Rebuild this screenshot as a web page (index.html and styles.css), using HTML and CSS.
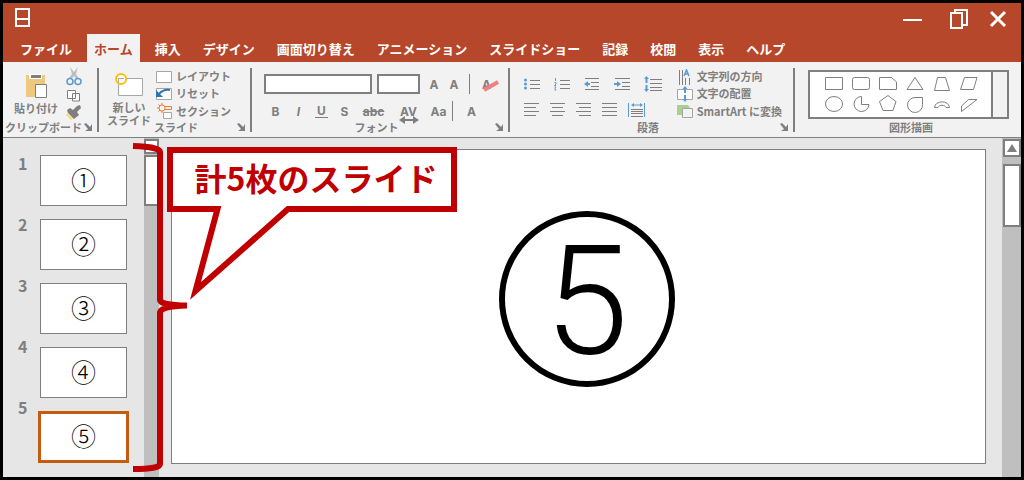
FILE: index.html
```html
<!DOCTYPE html>
<html lang="ja">
<head>
<meta charset="utf-8">
<meta name="viewport" content="width=device-width, initial-scale=1">
<title>スライド</title>
<link rel="stylesheet" href="styles.css">
</head>
<body>
<div class="window">
  <header class="titlebar">
    <svg class="app-icon" width="15" height="19" viewBox="0 0 15 19"><path d="M1 1H14V18H1ZM1 11H14" /></svg>
    <div class="window-controls">
      <button type="button" aria-label="最小化"><svg width="20" height="20" viewBox="0 0 20 20"><path d="M0 11H19" /></svg></button>
      <button type="button" aria-label="元に戻す"><svg width="20" height="20" viewBox="0 0 20 20"><path d="M2 4H13V19H2ZM6 4V1H18V16H13" /></svg></button>
      <button type="button" aria-label="閉じる"><svg class="close" width="20" height="20" viewBox="0 0 20 20"><path d="M3 3L17 17M17 3L3 17" /></svg></button>
    </div>
  </header>
  <nav class="tabs">
    <button type="button" class="tab">ファイル</button>
    <button type="button" class="tab active">ホーム</button>
    <button type="button" class="tab">挿入</button>
    <button type="button" class="tab">デザイン</button>
    <button type="button" class="tab">画面切り替え</button>
    <button type="button" class="tab">アニメーション</button>
    <button type="button" class="tab">スライドショー</button>
    <button type="button" class="tab">記録</button>
    <button type="button" class="tab">校閲</button>
    <button type="button" class="tab">表示</button>
    <button type="button" class="tab">ヘルプ</button>
  </nav>

  <div class="ribbon">
    <section class="group clipboard">
      <div class="group-body">
        <button type="button" class="big-button">
          <svg width="22" height="24" viewBox="0 0 22 24"><path fill="#edc87e" d="M1 1H20V23H1Z"/><path fill="#fff" d="M4 0H17V5H4Z"/><path fill="#7f7f7f" d="M6 1H16V4H6Z"/><path fill="#fff" stroke="#7f7f7f" d="M10.500 10.500H21.500V23.500H10.500Z"/></svg>
          <span>貼り付け</span>
        </button>
        <div class="tool-stack">
          <button type="button" aria-label="切り取り"><svg width="16" height="20" viewBox="0 0 16 20"><path fill="#bfbfbf" d="M4 1L8 6L12 1L10 8L13 13H10L8 10L5 13H2L6 8Z"/><g fill="none" stroke="#5b9bd5" stroke-width="1.500"><circle cx="4" cy="15.500" r="3"/><circle cx="12" cy="15.500" r="3"/></g></svg></button>
          <button type="button" aria-label="コピー"><svg width="14" height="13" viewBox="0 0 14 13"><path fill="#fff" stroke="#7f7f7f" d="M.5 1.500H8.500V9.500H.5ZM5.500 4.500H12.500V12H5.500Z"/></svg></button>
          <button type="button" aria-label="書式のコピー"><svg width="16" height="15" viewBox="0 0 16 15"><path fill="#ffd966" d="M1 8L7 14L5 15L0 10Z"/><path fill="#7f7f7f" d="M1 5L4 3L7 5L11 1L14 0L15 3L11 7L13 10L8 14L2 8Z"/></svg></button>
        </div>
      </div>
      <div class="group-footer"><span>クリップボード</span><button type="button" class="launcher" aria-label="クリップボードの詳細"><svg width="9" height="9" viewBox="0 0 9 9"><path d="M0 1L2 0L6 4L8 1V8H1L4 6Z"/></svg></button></div>
    </section>

    <section class="group slides">
      <div class="group-body">
        <button type="button" class="big-button">
          <svg width="30" height="24" viewBox="0 0 30 24"><path fill="#fff" stroke="#a6a6a6" d="M4.500 5.500H28.500V22.500H4.500Z"/><circle cx="7" cy="6" r="5" fill="#fff" stroke="#ffc000" stroke-width="2"/><path fill="none" stroke="#a6a6a6" d="M4.500 10V5.500H10"/></svg>
          <span>新しい</span>
          <span>スライド</span>
        </button>
        <div class="command-list">
          <button type="button"><svg width="16" height="16" viewBox="0 0 16 16"><path fill="#fff" stroke="#a6a6a6" d="M.5 2.500H15.500V13.500H.5Z"/></svg>レイアウト</button>
          <button type="button"><svg width="16" height="16" viewBox="0 0 16 16"><path fill="#fff" stroke="#a6a6a6" d="M.5 2.500H15.500V13.500H.5Z"/><path fill="none" stroke="#2e75b6" stroke-width="2" d="M3 8Q7 3 14 4"/><path fill="#2e75b6" d="M0 4V11L7 11Z"/></svg>リセット</button>
          <button type="button"><svg width="16" height="16" viewBox="0 0 16 16"><g fill="none" stroke="#ed7d31"><circle cx="6" cy="5" r="3"/><path d="M6 0V2M6 8V10M1 5H3M2.500 1.500L4 3M2.500 8.500L4 7M9 3.500H15.500V6.500H9"/></g><path fill="#fff" stroke="#a6a6a6" d="M7.500 9.500H15.500V15.500H7.500Z"/></svg>セクション</button>
        </div>
      </div>
      <div class="group-footer"><span>スライド</span><button type="button" class="launcher" aria-label="スライドの詳細"><svg width="9" height="9" viewBox="0 0 9 9"><path d="M0 1L2 0L6 4L8 1V8H1L4 6Z"/></svg></button></div>
    </section>

    <section class="group font">
      <div class="group-body">
        <div class="row font-top">
          <input type="text" class="font-name" aria-label="フォント名">
          <input type="text" class="font-size" aria-label="フォントサイズ">
          <button type="button" class="narrow">A</button>
          <button type="button" class="narrow">A</button>
          <i class="mini-rule"></i>
          <button type="button" class="clear">A<svg width="16" height="12" viewBox="0 0 16 12"><path d="M1 10L15 2"/></svg></button>
        </div>
        <div class="row font-bottom">
          <button type="button">B</button>
          <button type="button" class="italic">I</button>
          <button type="button" class="underline"><span>U</span></button>
          <button type="button">S</button>
          <button type="button" class="wide strike">abc</button>
          <button type="button" class="wide spacing">AV<svg width="20" height="8" viewBox="0 0 20 8"><path d="M0 4L6 0V3H14V0L20 4L14 8V5H6V8Z"/></svg></button>
          <button type="button" class="medium">Aa</button>
          <i class="mini-rule"></i>
          <button type="button" class="wide">A</button>
        </div>
      </div>
      <div class="group-footer"><span>フォント</span><button type="button" class="launcher" aria-label="フォントの詳細"><svg width="9" height="9" viewBox="0 0 9 9"><path d="M0 1L2 0L6 4L8 1V8H1L4 6Z"/></svg></button></div>
    </section>

    <section class="group paragraph">
      <div class="group-body">
        <div class="paragraph-tools">
          <div class="row list-row">
            <button type="button" aria-label="箇条書き"><svg width="16" height="14" viewBox="0 0 16 14"><path class="line" d="M6 3.500H16M6 7.500H16M6 11.500H16"/><g fill="#5b9bd5"><circle cx="1.500" cy="3" r="1.500"/><circle cx="1.500" cy="7" r="1.500"/><circle cx="1.500" cy="11" r="1.500"/></g></svg></button>
            <button type="button" aria-label="段落番号"><svg width="16" height="14" viewBox="0 0 16 14"><path class="line" d="M6 3.500H16M6 7.500H16M6 11.500H16"/><path class="blue" d="M1.500 1V4M.5 5.500H2V7L.5 8.500H2M.5 10H2L1 11.500L2 13H.5"/></svg></button>
            <button type="button" aria-label="インデントを減らす"><svg width="16" height="14" viewBox="0 0 16 14"><path class="line" d="M1 1.500H15M7 5.500H15M7 9.500H15M1 12.500H15"/><path fill="#5b9bd5" d="M0 7L4 4V6H6V8H4V10Z"/></svg></button>
            <button type="button" aria-label="インデントを増やす"><svg width="16" height="14" viewBox="0 0 16 14"><path class="line" d="M1 1.500H16M8 5.500H16M8 9.500H16M1 12.500H16"/><path fill="#5b9bd5" d="M7 7L3 4V6H0V8H3V10Z"/></svg></button>
            <button type="button" aria-label="行間"><svg width="18" height="16" viewBox="0 0 18 16"><path class="line" d="M6 3.500H18M6 7.500H18M6 11.500H18M6 14.500H18"/><path fill="#5b9bd5" d="M2.500 0L5 3H3.500V7H1.500V3H0ZM2.500 16L5 13H3.500V9H1.500V13H0Z"/></svg></button>
          </div>
          <div class="row align-row">
            <button type="button" aria-label="左揃え"><svg width="15" height="14" viewBox="0 0 15 14"><path class="line" d="M0 .5H15M0 4.500H12M0 8.500H15M0 12.500H12"/></svg></button>
            <button type="button" aria-label="中央揃え"><svg width="15" height="14" viewBox="0 0 15 14"><path class="line" d="M0 .5H15M2 4.500H13M0 8.500H15M2 12.500H13"/></svg></button>
            <button type="button" aria-label="右揃え"><svg width="15" height="14" viewBox="0 0 15 14"><path class="line" d="M0 .5H15M3 4.500H15M0 8.500H15M3 12.500H15"/></svg></button>
            <button type="button" aria-label="両端揃え"><svg width="15" height="14" viewBox="0 0 15 14"><path class="line" d="M0 .5H15M0 4.500H15M0 8.500H15M0 12.500H15"/></svg></button>
            <button type="button" aria-label="均等割り付け"><svg width="18" height="14" viewBox="0 0 18 14"><path class="line" d="M3 6.500H15M3 8.500H15M3 10.500H15M3 13.500H15"/><path class="blue" d="M.5 0V14M16.500 0V14M4 2H14"/><path fill="#5b9bd5" d="M3 2L6 0V4ZM15 2L12 0V4Z"/></svg></button>
          </div>
        </div>
        <div class="command-list">
          <button type="button"><svg width="16" height="16" viewBox="0 0 16 16"><path fill="none" stroke="#7f7f7f" d="M2.500 1V16M5.500 1V16M8.500 9V16M12.500 9V16"/><path fill="none" stroke="#5b9bd5" stroke-width="1.500" d="M7 7L9.500 1L12 7M8 5H11"/></svg>文字列の方向</button>
          <button type="button"><svg width="16" height="16" viewBox="0 0 16 16"><path fill="#fff" stroke="#a6a6a6" d="M.5 3.500H15.500V13.500H.5Z"/><path fill="#5b9bd5" d="M8 0L10.500 3H9V7H7V3H5.500ZM8 16L10.500 13H9V9H7V13H5.500Z"/></svg>文字の配置</button>
          <button type="button"><svg width="16" height="16" viewBox="0 0 16 16"><path fill="#a9d18e" d="M0 2H11L14 6V12H0Z"/><path fill="#f2f2f2" stroke="#a6a6a6" d="M5.500 5.500H15.500V14.500H5.500Z"/></svg>SmartArt に変換</button>
        </div>
      </div>
      <div class="group-footer"><span>段落</span><button type="button" class="launcher" aria-label="段落の詳細"><svg width="9" height="9" viewBox="0 0 9 9"><path d="M0 1L2 0L6 4L8 1V8H1L4 6Z"/></svg></button></div>
    </section>

    <section class="group drawing">
      <div class="group-body">
        <div class="gallery">
          <div class="shapes">
            <svg viewBox="0 0 18 18"><path d="M.5 3.500H17.500V15.500H.5Z"/></svg>
            <svg viewBox="0 0 18 18"><rect x=".5" y="3.500" width="17" height="12" rx="2"/></svg>
            <svg viewBox="0 0 18 18"><path d="M.5 3.500H12.500L17.500 8V15.500H.5Z"/></svg>
            <svg viewBox="0 0 18 18"><path d="M9 3.500L17 15.500H1Z"/></svg>
            <svg viewBox="0 0 18 18"><path d="M4.500 3.500H12.500L16.500 16.500H1.500Z"/></svg>
            <svg viewBox="0 0 18 18"><path d="M4.500 3.500H17L13.500 15.500H.5Z"/></svg>
            <svg viewBox="0 0 18 18"><ellipse cx="9" cy="9" rx="8.500" ry="7.500"/></svg>
            <svg viewBox="0 0 18 18"><path d="M9.500 1.500V9.500H17A7.500 7.500 0 1 1 9.500 1.500Z"/></svg>
            <svg viewBox="0 0 18 18"><path d="M9 .5L17 6.500L14 15.500H4L.5 6.500Z"/></svg>
            <svg viewBox="0 0 18 18"><path d="M16.500 2.500V9.500A7.500 7.500 0 1 1 9 2.500Z"/></svg>
            <svg viewBox="0 0 18 18"><path d="M1.500 12.500C2 5 16 5 16.500 12.500H13C12 9.500 6 9.500 5 12.500Z"/></svg>
            <svg viewBox="0 0 18 18"><path d="M1.500 16.500V11L8.500 4.500H17Z"/></svg>
          </div>
          <div class="gallery-more"></div>
        </div>
      </div>
      <div class="group-footer"><span>図形描画</span></div>
    </section>
  </div>

  <main class="workspace">
    <aside class="navigator">
      <div class="numbers"><span>1</span><span>2</span><span>3</span><span>4</span><span>5</span></div>
      <div class="thumbs">
        <button type="button" class="thumb">①</button>
        <button type="button" class="thumb">②</button>
        <button type="button" class="thumb">③</button>
        <button type="button" class="thumb">④</button>
        <button type="button" class="thumb selected">⑤</button>
      </div>
    </aside>
    <div class="scrollbar left"><button type="button" aria-label="上へ"><svg width="8" height="6" viewBox="0 0 10 8"><path d="M5 0L10 8H0Z"/></svg></button><div class="handle"></div></div>
    <div class="editor"><div class="slide"><div class="circled">5</div></div></div>
    <div class="scrollbar right"><button type="button" aria-label="上へ"><svg width="10" height="8" viewBox="0 0 10 8"><path d="M5 0L10 8H0Z"/></svg></button><div class="handle"></div></div>

    <svg class="brace" width="58" height="332" viewBox="0 0 58 332"><path d="M3 5Q30 6 30 11V159Q30 164 57 164.500M57 164.500Q30 165 30 172V323Q30 328 3 328"/></svg>
    <div class="callout">
      <svg width="290" height="156" viewBox="0 0 290 156"><path d="M3 3H287V62H121L28.500 144L50.500 62H3Z"/></svg>
      <p>計5枚のスライド</p>
    </div>
  </main>
</div>
</body>
</html>
```
FILE: styles.css
```css
* {
  box-sizing: border-box;
}

body {
  margin: 0;
  font-family: "Noto Sans CJK JP", sans-serif;
  color: #7f7f7f;
}

button {
  margin: 0;
  padding: 0;
  border: 0;
  background: none;
  color: inherit;
  font: inherit;
  cursor: pointer;
}

svg {
  display: block;
  flex: none;
}

.window {
  display: flex;
  flex-direction: column;
  min-height: 100vh;
  border: 3px solid #000;
  background: #e6e6e6;
}

/* Title bar */
.titlebar {
  display: flex;
  justify-content: space-between;
  align-items: center;
  height: 31px;
  padding: 0 13px 2px 12px;
  background: #b7472a;
}

.titlebar svg {
  fill: none;
  stroke: #fff;
  stroke-width: 2;
}

.titlebar .close {
  stroke-width: 3;
}

.window-controls {
  display: flex;
  gap: 26px;
  padding-top: 3px;
}

.window-controls button:last-child {
  margin-left: -7px;
}

.tabs {
  display: flex;
  gap: 8px;
  height: 28px;
  padding-left: 10px;
  background: #b7472a;
  color: #fff;
  font-size: 13px;
  font-weight: 700;
}

.tab {
  padding: 0 7px;
  white-space: nowrap;
}

.tab.active {
  background: #f2f2f2;
  color: #b7472a;
}

/* Ribbon */
.ribbon {
  display: flex;
  border-bottom: 1px solid #7f7f7f;
  background: #f2f2f2;
  font-size: 11px;
  font-weight: 700;
  line-height: 13px;
  white-space: nowrap;
}

.group {
  display: flex;
  flex-direction: column;
}

.group + .group::before {
  content: "";
  position: absolute;
  width: 2px;
  height: 64px;
  margin: 6px 0 0 -2px;
  background: #7f7f7f;
}

.group-body {
  display: flex;
  height: 58px;
}

.group-footer {
  display: flex;
  align-items: center;
  height: 17px;
  padding-bottom: 3px;
}

.group-footer span {
  flex: 1;
  text-align: center;
}

.launcher {
  margin-right: 6px;
}

.launcher svg,
.scrollbar svg {
  fill: #7f7f7f;
}

.clipboard {
  flex: 0 0 96px;
}

.slides {
  flex: 0 0 153px;
}

.font {
  flex: 0 0 258px;
}

.paragraph {
  flex: 0 0 285px;
}

.drawing {
  flex: 1;
}

.big-button {
  display: flex;
  flex-direction: column;
  align-items: center;
  justify-content: flex-start;
  padding-top: 12px;
}

.big-button svg {
  margin-bottom: 4px;
}

.clipboard .group-body {
  gap: 8px;
  padding-left: 11px;
}

.tool-stack {
  display: flex;
  flex-direction: column;
  align-items: center;
  gap: 3px;
  padding-top: 4px;
}

.slides .group-body {
  gap: 5px;
  padding-left: 8px;
}

.slides .group-footer {
  padding-left: 16px;
}

.font .group-footer,
.paragraph .group-footer {
  padding-left: 6px;
}

.drawing .group-footer {
  padding-left: 6px;
}

.slides .big-button {
  padding-top: 11px;
}

.command-list {
  display: flex;
  flex-direction: column;
  padding-top: 6px;
}

.command-list button {
  display: flex;
  align-items: center;
  gap: 4px;
  height: 18px;
}

.row {
  display: flex;
  align-items: center;
}

.row button {
  display: flex;
  justify-content: center;
}

.font .group-body {
  flex-direction: column;
  gap: 7px;
  padding: 12px 0 0 12px;
  font-size: 12px;
  font-family: Inter, sans-serif;
}

.row input {
  height: 20px;
  border: 2px solid #7f7f7f;
  background: #fff;
}

.font-name {
  width: 108px;
}

.font-size {
  width: 43px;
  margin: 0 4px 0 5px;
}

.font-bottom button {
  width: 23px;
}

.font-top .narrow {
  width: 20px;
}

.font-bottom .medium {
  width: 25px;
}

.font-bottom .wide {
  width: 35px;
}

.mini-rule {
  width: 1px;
  height: 20px;
  margin: 0 1px;
  background: #7f7f7f;
}

.font-top .mini-rule {
  margin: 0 12px 0 5px;
}

.clear,
.spacing {
  position: relative;
}

.clear svg {
  position: absolute;
  top: 2px;
  left: 1px;
  fill: none;
  stroke: #f08080;
  stroke-width: 4;
}

.spacing svg {
  position: absolute;
  top: 11px;
  left: 8px;
  fill: #7f7f7f;
}

.italic {
  font-style: italic;
}

.underline span {
  padding: 0 2px;
  border-bottom: 1px solid #7f7f7f;
}

.strike {
  text-decoration: line-through;
}

.paragraph .group-body {
  justify-content: space-between;
  padding: 0 13px 0 14px;
}

.paragraph-tools {
  display: flex;
  flex-direction: column;
  gap: 11px;
  padding-top: 14px;
}

.list-row {
  gap: 14px;
}

.align-row {
  gap: 11px;
}

.line {
  fill: none;
  stroke: #7f7f7f;
}

.blue {
  fill: none;
  stroke: #5b9bd5;
}

.drawing .group-body {
  padding: 8px 12px 1px 13px;
}

.gallery {
  display: flex;
  flex: 1;
  border: 2px solid #7f7f7f;
}

.shapes {
  display: grid;
  flex: 1;
  grid-template-columns: repeat(6, 1fr);
  align-content: center;
  justify-items: center;
  gap: 3px 0;
  padding: 0 9px 2px 10px;
  background: #fff;
}

.shapes svg {
  width: 18px;
  height: 18px;
  fill: none;
  stroke: #7f7f7f;
}

.gallery-more {
  width: 16px;
  border-left: 2px solid #7f7f7f;
}

/* Workspace */
.workspace {
  position: relative;
  display: flex;
  flex: 1;
}

.navigator {
  display: flex;
  gap: 11px;
  padding: 17px 17px 13px 15px;
}

.numbers {
  display: flex;
  flex-direction: column;
  gap: 45px;
  width: 11px;
  font-size: 16px;
  font-weight: 700;
  line-height: 16px;
}

.thumbs {
  display: flex;
  flex-direction: column;
  gap: 13px;
}

.thumb {
  width: 87px;
  height: 51px;
  padding-bottom: 4px;
  border: 1px solid #7f7f7f;
  background: #fff;
  color: #000;
  font-size: 25px;
  font-weight: 300;
  line-height: 26px;
}

.thumb.selected {
  width: 91px;
  height: 52px;
  margin: 0 -2px;
  border: 3px solid #c55a11;
}

.scrollbar {
  display: flex;
  flex-direction: column;
  padding: 1px 0 0 1px;
  background: #bfbfbf;
}

.scrollbar button,
.handle {
  border: 2px solid #7f7f7f;
  background: #fff;
}

.scrollbar button {
  display: flex;
  align-items: center;
  justify-content: center;
}

.left {
  width: 15px;
  gap: 1px;
  padding-left: 0;
}

.left button {
  height: 15px;
}

.left .handle {
  height: 51px;
}

.right {
  width: 19px;
  gap: 7px;
}

.right button {
  height: 18px;
}

.right .handle {
  height: 63px;
}

.editor {
  display: flex;
  flex: 1;
  padding: 11px 16px 13px 12px;
}

.slide {
  display: flex;
  flex: 1;
  align-items: center;
  justify-content: center;
  padding: 0 0 16px 16px;
  border: 1px solid #7f7f7f;
  background: #fff;
  color: #000;
}

.circled {
  width: 176px;
  height: 176px;
  border: 6px solid #000;
  border-radius: 50%;
  font-family: Roboto, "Liberation Sans", sans-serif;
  font-size: 152px;
  font-weight: 300;
  line-height: 170px;
  text-align: center;
}

.brace {
  position: absolute;
  top: 3px;
  left: 127px;
  fill: none;
  stroke: #c00000;
  stroke-width: 6;
}

.callout {
  position: absolute;
  top: 9px;
  left: 164px;
  width: 290px;
  color: #c00000;
}

.callout svg {
  position: absolute;
  fill: #fff;
  stroke: #c00000;
  stroke-width: 6;
  stroke-miterlimit: 10;
}

.callout p {
  position: relative;
  margin: 0;
  padding-left: 8px;
  font-size: 32px;
  font-weight: 700;
  line-height: 60px;
  text-align: center;
  white-space: nowrap;
}
```
